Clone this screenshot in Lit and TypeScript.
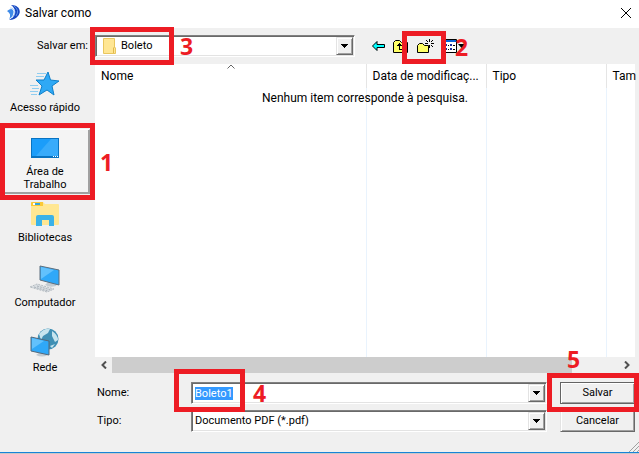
import { LitElement, html, css, svg } from "lit";
import { customElement } from "lit/decorators.js";

const logo = html`<svg class="logo" viewBox="0 0 14 16" width="14" height="16" aria-hidden="true">
  <path d="M4 0 C12 0 15 6 11 11 Q8 15 2 15 Q7 12 8 7 Q8 3 4 0Z" fill="#1746c0"/>
  <path d="M0 6 Q5 2 6.500 6 Q7 11 2 14 Q5 9 0 6Z" fill="#3f8be8"/>
  <path d="M3 3 C9 3 9 9 5 13" fill="none" stroke="#b5d4fb" stroke-width="1"/>
  <path d="M7 1 Q13 5 9 11" fill="none" stroke="#5b8fe6" stroke-width="1"/>
</svg>`;

const star = html`<svg viewBox="0 0 32 28" width="32" height="28" aria-hidden="true">
  <path d="M8 3.500H17M7 6.500H15M1 15.500H9M3 18.500H10M1 21.500H9M2 24.500H8" stroke="#8fcdf0"/>
  <path d="M19 2 L21.500 10 L30 11 L23 16 L25 25 L18 20 L10 25 L13 16 L7 10 L15 10Z" fill="#2fa9f5" stroke="#0f7fc8" stroke-linejoin="round"/>
</svg>`;

const desktop = html`<svg viewBox="0 -4 28 28" width="28" height="28" aria-hidden="true">
  <rect width="28" height="20" fill="#0873c2"/>
  <rect x="1" y="1" width="26" height="17" fill="#1b9dfa"/>
  <path d="M5 18 L20 1 H27 V18Z" fill="#38abfb"/>
  <path d="M22 18h1v1h-1zM24 18h1v1h-1zM26 18h1v1h-1z" fill="#fff"/>
</svg>`;

const library = html`<svg viewBox="0 -2 28 28" width="28" height="28" aria-hidden="true">
  <path d="M0 1 Q0 0 1 0 H12 L14 2 H27 Q28 2 28 3 V22 Q28 23 27 23 H1 Q0 23 0 22Z" fill="#ffe793"/>
  <path d="M0 1 Q0 0 1 0 H12 V4 H0Z" fill="#fbc935"/><path d="M2 2H7" stroke="#fff" stroke-width="2"/><path d="M4 2H9" stroke="#37a6dc" stroke-width="2"/>
  <path d="M5 24 V15 Q5 13 7 13 H21 Q23 13 23 15 V24 H18 V18 H11 V24Z" fill="#3bb2e8"/>
</svg>`;

const computer = html`<svg viewBox="0 0 32 28" width="32" height="28" aria-hidden="true">
  <path d="M16 20 l3 -3 l9 2 l-1 2 q-6 2 -11 -1Z" fill="#c3cbd1"/>
  <path d="M11 1 L30 5 V20 L11 15Z" fill="#2fa8f8" stroke="#5d6f7e"/>
  <path d="M12 14 L25 5 L12 2Z" fill="#62c1fc"/>
  <path d="M1 22 L8 19 L25 24 L18 27Z" fill="#dadfe3" stroke="#b5bcc2" stroke-dasharray="2 1"/>
  <path d="M5 22 L19 26 M8 21 L22 25" stroke="#aab2b9" stroke-dasharray="2 1"/>
</svg>`;

const network = html`<svg viewBox="0 0 30 30" width="30" height="30" aria-hidden="true">
  <circle cx="18" cy="11" r="10.500" fill="#3f8fb4"/>
  <path d="M9 6 Q14 0 20 1 L18 5 L13 8 L11 12Z M22 3 Q28 7 28 12 L25 14 L22 8Z M20 18 L25 16 L22 20Z" fill="#c6e4ee"/>
  <path d="M6 27 L10 24 L16 25 L18 27 Q12 30 6 27Z" fill="#c3cbd1"/>
  <path d="M1 9 L19 13 V27 L1 23Z" fill="#2fa8f8" stroke="#53687a"/>
  <path d="M2 21 L14 13 L2 10Z" fill="#62c1fc"/>
</svg>`;

const folder = html`<svg class="folder" viewBox="0 0 13 16" width="13" height="16" aria-hidden="true">
  <path d="M0.500 0.500 H11.500 V9 L12.500 10 V15.500 H0.500Z" fill="#ffe693" stroke="#e9c65e"/>
  <path d="M10.500 15 V10 L11.500 9" fill="none" stroke="#e0b94d"/>
</svg>`;

const back = html`<svg viewBox="0 0 13 10" width="13" height="10" aria-hidden="true">
  <path d="M0.500 5 L5 0.500 V3.500 H12.500 V6.500 H5 V9.500Z" fill="#0ff" stroke="#000"/>
</svg>`;

const up = html`<svg viewBox="0 0 16 13" width="16" height="13" aria-hidden="true">
  <path d="M0.500 12.500 V2.500 L2.500 0.500 H6.500 L8.500 2.500 H14.500 V12.500Z" fill="#ff6" stroke="#000"/>
  <path d="M4 6h5v-1h-1v-1h-1v-1h-1v1h-1v1h-1z M6 6h1v3h5v1h-6z" fill="#000"/>
</svg>`;

const create = html`<svg viewBox="0 0 17 15" width="17" height="15" aria-hidden="true">
  <path d="M0.500 13.500 V6.500 L2.500 4.500 H5.500 L7.500 6.500 H11.500 V13.500Z" fill="#ff6" stroke="#000"/>
  <path d="M12 0h1v3h-1zM12 6h1v3h-1zM8 4h3v1h-3zM14 4h3v1h-3zM9 1h1v1h-1zM10 2h1v1h-1zM15 1h1v1h-1zM14 2h1v1h-1zM14 6h1v1h-1zM15 7h1v1h-1z" fill="#000"/>
</svg>`;

const views = html`<svg viewBox="0 0 24 14" width="24" height="14" aria-hidden="true">
  <path d="M0.500 0.500H14.500V13.500H0.500Z" fill="#fff" stroke="#000"/>
  <path d="M1 1H14V3H1Z" fill="#0a64d8"/>
  <path d="M3 5h2v2h-2zM3 9h2v2h-2zM8 5h2v2h-2zM8 9h2v2h-2z" fill="#1b2c9c"/>
  <path d="M6 6h1v1h-1zM6 10h1v1h-1zM11 6h2v1h-2zM11 10h2v1h-2z" fill="#000"/>
  <path d="M16 5h7l-3.500 4z" fill="#000"/>
</svg>`;

const places = [
  { icon: star, label: "Acesso rápido" },
  { icon: desktop, label: "Área de Trabalho", step: "1" },
  { icon: library, label: "Bibliotecas" },
  { icon: computer, label: "Computador" },
  { icon: network, label: "Rede" },
];

const ridges = [0, 4, 8].map((x) => svg`<path d=${`M${x} 10L10 ${x}`} stroke="#a0a0a0"/>`);

@customElement("app-root")
export class AppRoot extends LitElement {
  static styles = css`
    :host { display: block; color: #000; background: #c8c8c8; font: 11px/14px Roboto, "Liberation Sans", sans-serif; }
    *, *::before, *::after { box-sizing: border-box; }
    svg { display: block; flex: none; }
    button, input, select { font: inherit; color: inherit; margin: 0; border: 0; border-radius: 0; outline: none; }
    button { padding: 0; background: none; }
    .page { height: 100vh; min-height: 320px; padding-bottom: 1px; }
    .dialog { position: relative; height: 100%; background: #f0f0f0; display: flex; flex-direction: column; border-bottom: 1px solid #1883d7; }
    .title { height: 28px; flex: none; background: #fff; display: flex; align-items: center; padding: 0 7px 3px; gap: 4px; }
    .title h1 { margin: 0; flex: 1; font: 12px/16px Roboto, "Open Sans", sans-serif; }
    .close { width: 12px; height: 12px; }
    .close svg { margin: auto; }
    .mark { position: relative; }
    .mark::before { content: ""; position: absolute; inset: var(--inset); border: 5px solid #ed1c24; pointer-events: none; z-index: 2; }
    .step { position: absolute; z-index: 3; color: #ed1c24; font: bold 23px/24px "Open Sans", "Noto Sans", sans-serif; pointer-events: none; }
    .body { flex: 1; min-height: 0; display: grid; grid-template-columns: 95px minmax(0, 1fr); grid-template-rows: 36px minmax(0, 1fr) auto; }
    .where { text-align: right; padding: 11px 7px 0 0; }
    .tools { display: flex; align-items: center; }
    .combo { position: relative; height: 22px; border: 1px solid; border-color: #808080 #fff #fff #808080; background: #fff; box-shadow: inset 1px 1px #696969, inset -1px -1px #e3e3e3; }
    .combo select, .combo input { appearance: none; width: 100%; height: 20px; padding: 0 20px 0 3px; background: transparent; display: block; }
    .combo::after { content: ""; position: absolute; right: 1px; top: 1px; width: 17px; height: 18px; pointer-events: none;
      border: 1px solid; border-color: #e3e3e3 #696969 #696969 #e3e3e3; box-shadow: inset 1px 1px #fff, inset -1px -1px #a0a0a0;
      background: linear-gradient(#000, #000) 4px 6px / 7px 1px no-repeat, linear-gradient(#000, #000) 5px 7px / 5px 1px no-repeat,
      linear-gradient(#000, #000) 6px 8px / 3px 1px no-repeat, linear-gradient(#000, #000) 7px 9px / 1px 1px no-repeat, #f0f0f0; }
    .look { width: 260px; flex: none; }
    .look select { padding-left: 25px; }
    .look .folder { position: absolute; left: 7px; top: 2px; }
    .look .mark { position: absolute; inset: 0 auto 0 0; width: 78px; --inset: -9px 0 -9px -6px; pointer-events: none; }
    .bar { display: flex; align-items: center; gap: 8px; padding-left: 17px; }
    .new { --inset: -8px -12px -10px -15px; }
    .places { display: flex; flex-direction: column; margin: 0; padding: 0; list-style: none; }
    .places li { height: 65px; }
    .place { width: 90px; height: 65px; display: flex; flex-direction: column; align-items: center; justify-content: flex-end; gap: 3px; padding-bottom: 15px; line-height: 13px; }
    .places li.mark { --inset: -6px 0 -6px 0; }
    .mark .place { background: #f4f4f4; border: 1px solid; border-color: #fff #a0a0a0 #a0a0a0 #fff; padding: 0 16px 2px; box-shadow: inset -1px -1px #a0a0a0; }
    .list { background: #fff; margin-right: 4px; display: flex; flex-direction: column; min-height: 0; }
    .files { flex: 1; border-collapse: collapse; table-layout: fixed; width: 100%; font: 12px/16px Roboto, "Open Sans", sans-serif; }
    .view { flex: 1; min-height: 0; position: relative; display: flex; }
    .files th { height: 24px; padding: 0 0 0 6px; text-align: left; font-weight: 400; white-space: nowrap; border-right: 1px solid #e5e5e5; }
    .files td { border-right: 1px solid #e9f3fd; }
    .files th:last-child, .files td:last-child { border-right: 0; }
    .date, .type { width: 120px; }
    .size { width: 29px; }
    .empty { position: absolute; top: 26px; left: 0; right: 0; margin: 0; text-align: center; font: 12px/16px Roboto, "Open Sans", sans-serif; }
    .sort { position: absolute; top: 0; left: 132px; }
    .scroll { height: 16px; flex: none; background: #f0f0f0; display: flex; align-items: center; }
    .scroll button { width: 17px; height: 16px; }
    .scroll svg { margin: auto; }
    .track { flex: 1; height: 16px; }
    .thumb { width: 91%; height: 16px; background: #cdcdcd; }
    .form { grid-column: 2; display: grid; grid-template-columns: 96px minmax(0, 1fr) 75px; row-gap: 6px; align-items: center; padding: 9px 4px 20px 0; }
    .form label { padding-left: 2px; }
    .form .combo { margin-right: 13px; }
    .name { --inset: -14px auto -9px -18px; }
    .name::before { width: 71px; }
    .name input::selection { background: #3399ff; color: #fff; }
    .action { height: 22px; background: #f0f0f0; border: 1px solid; border-color: #e3e3e3 #696969 #696969 #e3e3e3; box-shadow: inset 1px 1px #fff, inset -1px -1px #a0a0a0; width: 100%; }
    .default .action { border-color: #646464; }
    .default { --inset: -9px -4px -8px -13px; }
    .s1 { left: 100px; top: 21px; }
    .s2 { left: 38px; top: -4px; }
    .s3 { left: 84px; top: -2px; }
    .s4 { left: 61px; top: -2px; }
    .s5 { left: 7px; top: -35px; }
    .grip { position: absolute; right: 0; bottom: 0; }
  `;

  firstUpdated() {
    const name = this.renderRoot.querySelector<HTMLInputElement>("#name");
    name?.focus();
    name?.select();
  }

  render() {
    return html`<div class="page"><main class="dialog">
      <header class="title">${logo}<h1>Salvar como</h1>
        <button class="close" aria-label="Fechar"><svg viewBox="0 0 10 10" width="10" height="10"><path d="M0 0L10 10M10 0L0 10" stroke="#000"/></svg></button>
      </header>
      <div class="body">
        <label class="where" for="look">Salvar em:</label>
        <div class="tools">
          <div class="combo look"><select id="look"><option>Boleto</option></select>${folder}
            <div class="mark"><span class="step s3">3</span></div></div>
          <div class="bar">
            <button aria-label="Voltar">${back}</button>
            <button aria-label="Um nível acima">${up}</button>
            <button class="mark new" aria-label="Criar nova pasta">${create}<span class="step s2">2</span></button>
            <button aria-label="Menu de exibição">${views}</button>
          </div>
        </div>
        <ul class="places">${places.map((p) => html`<li class=${p.step ? "mark" : ""}>
          <button class="place">${p.icon}<span>${p.label}</span></button>
          ${p.step ? html`<span class="step s1">${p.step}</span>` : ""}</li>`)}</ul>
        <section class="list">
          <div class="view">
            <table class="files">
              <thead><tr><th>Nome</th><th class="date">Data de modificaç...</th><th class="type">Tipo</th><th class="size">Tam</th></tr></thead>
              <tbody><tr><td></td><td></td><td></td><td></td></tr></tbody>
            </table>
            <svg class="sort" viewBox="0 0 8 5" width="8" height="5" aria-hidden="true"><path d="M0.500 4.500L4 1L7.500 4.500" fill="none" stroke="#666"/></svg>
            <p class="empty">Nenhum item corresponde à pesquisa.</p>
          </div>
          <div class="scroll">
            <button aria-label="Rolar para a esquerda"><svg viewBox="0 0 6 8" width="6" height="8"><path d="M5 0.500L1.500 4L5 7.500" fill="none" stroke="#505050" stroke-width="2"/></svg></button>
            <div class="track"><div class="thumb"></div></div>
            <button aria-label="Rolar para a direita"><svg viewBox="0 0 6 8" width="6" height="8"><path d="M1 0.500L4.500 4L1 7.500" fill="none" stroke="#505050" stroke-width="2"/></svg></button>
          </div>
        </section>
        <form class="form" @submit=${(e: Event) => e.preventDefault()}>
          <label for="name">Nome:</label>
          <div class="combo mark name"><input id="name" type="text" .value=${"Boleto1"} autocomplete="off"><span class="step s4">4</span></div>
          <div class="mark default"><button class="action">Salvar</button><span class="step s5">5</span></div>
          <label for="type">Tipo:</label>
          <div class="combo"><select id="type"><option>Documento PDF (*.pdf)</option></select></div>
          <button class="action" type="button">Cancelar</button>
        </form>
      </div>
      <svg class="grip" viewBox="0 0 10 10" width="10" height="10" aria-hidden="true">${ridges}</svg>
    </main></div>`;
  }
}
